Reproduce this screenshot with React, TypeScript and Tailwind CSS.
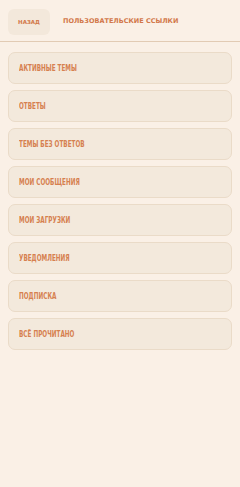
const items = [
  'Активные темы',
  'Ответы',
  'Темы без ответов',
  'Мои сообщения',
  'Мои загрузки',
  'Уведомления',
  'Подписка',
  'Всё прочитано',
];

export default function App() {
  return (
    <div className="min-h-screen w-full bg-[#faf0e6]">
      {/* Header */}
      <div className="flex items-center gap-[13px] border-b border-[#e2cbb4] px-2 pt-[9px] pb-[6px]">
        <button className="h-[26px] w-[42px] rounded-md bg-[#f3e8db] font-['DejaVu_Sans',sans-serif] text-[5.5px] font-bold uppercase text-[#d2784a]">
          Назад
        </button>
        <span className="font-['DejaVu_Sans',sans-serif] text-[6.5px] font-bold uppercase text-[#d2784a]">
          Пользовательские ссылки
        </span>
      </div>

      {/* Links */}
      <div className="flex flex-col gap-[6px] px-2 pt-[10px]">
        {items.map((label) => (
          <a
            key={label}
            href="#"
            className="flex h-[32px] items-center rounded-[7px] border border-[#eadbc8] bg-[#f3e9dc] px-[10px] font-['DejaVu_Sans',sans-serif] text-[8.5px] font-bold uppercase text-[#d6804f]"
          >
            <span className="inline-block origin-left scale-x-[0.67] whitespace-nowrap">{label}</span>
          </a>
        ))}
      </div>
    </div>
  );
}
